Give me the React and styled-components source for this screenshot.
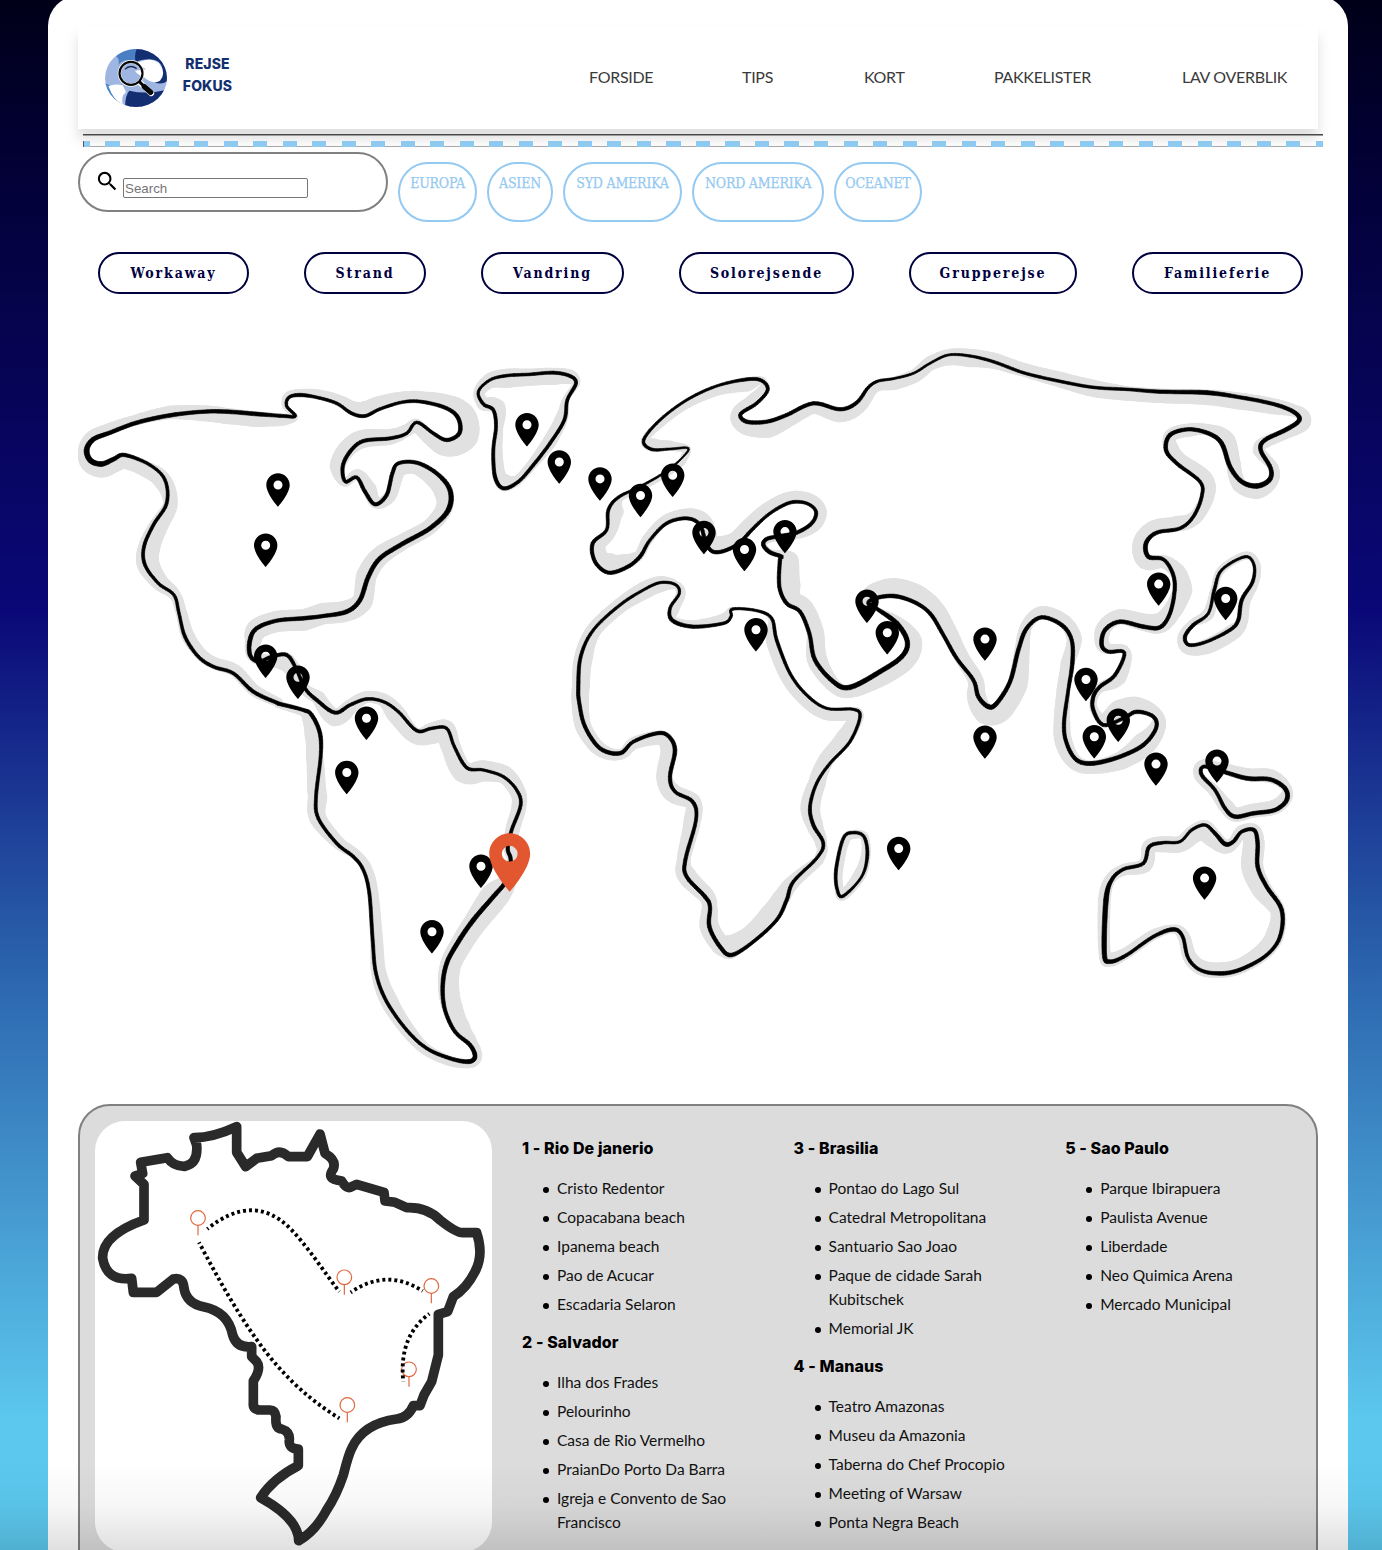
import React from "react";
import styled, { createGlobalStyle } from "styled-components";

const GlobalStyle = createGlobalStyle`
  * { box-sizing: border-box; }
  body { margin: 0; background: #5cc8ee; }
`;

const sans = `Lato, "Open Sans", "Liberation Sans", sans-serif`;
const heading = `Inter, Roboto, "Liberation Sans", sans-serif`;
const serif = `"DejaVu Serif Condensed", "DejaVu Serif", "Liberation Serif", serif`;

const Backdrop = styled.div`
  position: relative;
  height: 1550px;
  overflow: hidden;
  padding: 0 34px 0 48px;
  background: linear-gradient(#010018 0, #020030 130px, #0a0878 612px, #2a62ac 960px, #5cc8ee 1420px);
`;

const BottomShade = styled.div`
  position: absolute;
  inset: auto 0 0 0;
  height: 90px;
  background: linear-gradient(rgba(0, 0, 0, 0), rgba(0, 0, 0, 0.03) 50%, rgba(0, 0, 0, 0.12));
  pointer-events: none;
`;

const Page = styled.main`
  margin-top: -4px;
  min-height: 1700px;
  padding: 30px;
  border-radius: 30px;
  background: #fff;
`;

const Header = styled.header`
  display: flex;
  align-items: center;
  justify-content: space-between;
  height: 103px;
  padding: 0 30px 0 27px;
  background: #fff;
  box-shadow: 0 10px 12px rgba(0, 0, 0, 0.13);
`;

const Brand = styled.a`
  display: flex;
  align-items: center;
  gap: 15px;
`;

const BrandName = styled.span`
  width: 51px;
  margin-bottom: 6px;
  font: 800 14px/21.5px ${heading};
  letter-spacing: 0.1px;
  text-align: center;
  color: #14306f;
`;

const Nav = styled.nav`
  display: flex;
  gap: 90px;
  margin-bottom: 2px;
`;

const NavLink = styled.a`
  width: ${(p) => p.$w}px;
  font: 400 16px/24px ${sans};
  letter-spacing: -0.3px;
  white-space: nowrap;
  color: #3a3a3a;
`;

const Rule = styled.div`
  position: relative;
  width: 1240px;
  height: 2px;
  margin: 5px 0 0 5px;
  border-top: 1px solid #484848;
  border-bottom: 1px solid #9c9c9c;
`;

const DashRule = styled.div`
  position: relative;
  width: 1240px;
  height: 6px;
  margin: 5px 0 0 5px;
  border-left: 1px solid #555;
  background:
    repeating-linear-gradient(to right, #8ec9f0 0 7.1px, transparent 7.1px 22.5px, #8ec9f0 22.5px 29.52px) border-box,
    linear-gradient(#a8a8a8, #a8a8a8) bottom / 100% 1px no-repeat;
`;

const SearchRow = styled.section`
  display: flex;
  align-items: flex-start;
  gap: 10px;
  margin-top: 5px;
`;

const SearchBox = styled.label`
  display: flex;
  width: 310px;
  height: 60px;
  padding: 17px 17px 0;
  gap: 5px;
  border: 2px solid #808080;
  border-radius: 30px;
`;

const SearchInput = styled.input`
  width: 185px;
  height: 20px;
  margin: 7px 0 0;
  padding: 1px;
  border: 1px solid #767676;
  border-radius: 2px;
  background: #fff;
  font: 13.33px "Liberation Sans", Arial, sans-serif;
  &::placeholder { color: #757575; opacity: 1; }
`;

const RegionTag = styled.button`
  width: ${(p) => p.$w}px;
  height: 60px;
  margin-top: 10px;
  padding: 9px 0 0;
  display: flex;
  justify-content: center;
  align-items: flex-start;
  border: 2px solid #94c9f2;
  border-radius: 30px;
  background: none;
  font: 14px/20px ${serif};
  letter-spacing: -0.2px;
  white-space: nowrap;
  color: #94c9f2;
  -webkit-text-stroke: 0.25px #94c9f2;
`;

const TopicRow = styled.section`
  display: flex;
  gap: 55px;
  margin: 30px 0 0 20px;
`;

const Topic = styled.button`
  flex: none;
  width: ${(p) => p.$w}px;
  height: 42px;
  padding: 0;
  border: 2px solid #00003f;
  border-radius: 21px;
  background: none;
  font: bold 14px/20px ${serif};
  letter-spacing: 1.85px;
  white-space: nowrap;
  color: #00003f;
`;

const WorldMap = styled.svg`
  display: block;
  width: 1240px;
  height: 740px;
  margin-top: 46px;
`;

const CountryPanel = styled.section`
  display: flex;
  margin-top: 24px;
  min-height: 520px;
  padding: 15px;
  border: 2px solid #808080;
  border-radius: 32px;
  background: #dcdcdc;
`;

const RouteMap = styled.svg`
  display: block;
  flex: none;
  width: 397px;
  height: 431px;
  border-radius: 30px;
  background: #fff;
`;

const Columns = styled.div`
  display: grid;
  grid-template-columns: repeat(3, 241.6px);
  gap: 30px;
  align-items: start;
  padding: 15px 0 0 30px;
`;

const CityTitle = styled.h4`
  margin: 0 0 16px;
  font: 800 16px/24px ${heading};
  letter-spacing: 0.1px;
  color: #000;
`;

const SightList = styled.ul`
  margin: 0 0 13.5px;
  padding: 0 0 0 35px;
  list-style: none;
`;

const Sight = styled.li`
  position: relative;
  margin-bottom: 5px;
  font: 400 15.5px/24px ${sans};
  letter-spacing: 0;
  color: #111;
  &::before {
    content: "";
    position: absolute;
    left: -14px;
    top: 11px;
    width: 6px;
    height: 6px;
    border-radius: 50%;
    background: #000;
  }
`;

/*
 * Coastlines are digitised on sheets. Each sheet has its own origin, and its
 * points are in thirds of a pixel: x, y, shade to the left of the direction
 * of travel, shade to the right, and the ink width.
 */
const A = [70, 340], B = [470, 340], C = [880, 340], D = [240, 700], E = [560, 560], F = [960, 600];

const coasts = [
  [
    [A, `70,298,28,5,15 120,278,30,5,13 200,248,25,8,13 300,226,30,12,13 400,215,20,30,12 470,215,12,38,13 560,222,8,40,13 640,228,8,30,11 676,228,8,8,10 650,198,14,3,10 657,172,18,5,10 690,165,18,5,12 740,172,25,5,10 800,190,28,8,10 845,220,38,6,11 885,228,45,5,11 930,207,40,5,10 1000,186,32,5,10 1060,186,32,5,11 1130,205,42,5,12 1165,235,55,5,13 1168,280,60,5,13 1130,300,50,5,12 1090,280,40,5,11 1040,247,30,10,10 1010,280,10,28,10 960,295,20,28,11 880,303,22,35,12 840,335,15,40,12 818,380,8,40,12 826,425,5,15,11 860,412,26,8,11 885,455,38,8,12 915,493,20,12,12 950,465,8,30,12 967,400,5,35,12 985,370,5,40,11 1040,368,5,35,12 1100,400,5,45,13 1140,450,5,50,15 1135,510,12,40,16 1080,565,20,28,14 1000,610,20,30,14 930,655,25,35,14 895,710,25,38,14 870,780,40,22,14 830,815,30,35,14 760,828,25,40,12 700,835,38,28,13 620,842,35,30,12 560,865,35,30,13 540,900,35,15,14 540,945,28,12,13 565,965,30,8,11 605,950,5,35,11 650,945,8,50,12 678,985,15,35,11 705,1045,15,20,11 740,1080,30,12,12`],
    [D, `285,38,12,42,12 330,15,18,28,11 380,-3,25,12,10 430,5,25,15,10 475,35,20,40,10 530,92,8,40,11 575,85,18,48,10 620,85,25,40,10 643,140,20,40,10 680,203,15,50,11 730,210,30,35,9 790,230,35,20,10 830,270,25,25,10 842,315,18,28,11 815,390,25,20,11 803,445,25,12,12 812,480,25,12,12 800,540,30,15,13 760,590,45,42,14 700,660,45,26,15 655,725,45,22,15 620,790,45,20,14 608,860,50,15,13 615,930,55,8,12 645,995,50,5,12 690,1035,25,5,13 705,1070,22,5,14 685,1085,20,5,14 630,1075,24,8,12 560,1045,22,14,11 500,990,20,25,11 440,905,20,35,11 408,820,15,32,11 398,720,8,32,11 388,580,6,28,11 370,510,5,28,11 340,470,6,26,11 290,430,15,25,11 235,355,28,25,11 228,290,25,35,11 242,170,45,8,11 240,100,48,4,13 215,45,32,4,13 190,30,20,6,12 120,12,14,10,12`],
    [A, `620,1088,12,18,12 550,1055,14,24,12 490,1000,10,30,11 430,980,8,30,11 385,950,8,30,11 345,890,12,30,11 327,820,10,25,10 312,765,16,20,10 265,730,20,32,10 225,675,25,45,11 222,620,18,50,11 250,555,14,45,11 290,490,10,34,11 285,420,36,20,10 240,375,42,8,10 165,345,42,5,12 130,358,40,5,14 95,372,42,5,16 62,362,36,5,17 50,330,26,5,17`],
  ],
  [[B, `25,155,14,20,9 60,120,22,25,9 110,107,22,38,10 180,103,18,35,10 250,98,15,38,11 300,108,20,25,11 318,130,12,10,11 292,180,5,15,11 283,240,10,30,11 240,310,18,26,11 190,375,12,20,11 145,425,10,20,11 100,445,8,45,12 75,410,8,34,12 70,330,6,28,11 78,260,6,22,11 70,210,6,40,11 40,192,20,20,11`]],
  [
    [B, `521,300,8,14,10 570,240,6,22,9 650,180,5,25,9 740,138,5,30,9 830,118,5,38,11 875,122,12,8,11 893,150,5,28,11 860,190,5,35,11 812,222,5,28,12 830,245,5,40,13 890,245,5,50,12 950,225,5,38,12 1030,190,5,32,12 1110,208,5,40,12 1160,188,5,35,12 1195,142,5,30,10`],
    [C, `-5,123,5,30,9 40,116,6,35,8 100,100,12,30,8 150,70,22,22,8 205,45,18,32,8 270,48,22,35,9 340,65,28,22,10 430,98,30,12,10 530,122,30,18,10 640,142,24,30,10 740,148,10,35,10 840,155,10,35,12 980,158,10,38,14 1080,172,15,38,12 1180,192,18,32,12 1240,215,22,15,13 1258,240,38,5,14 1220,268,28,5,14 1155,300,25,12,13 1142,330,12,25,13 1172,385,25,6,13 1168,420,28,5,15 1130,438,40,5,16 1085,425,35,10,14 1050,380,10,35,14 1025,310,5,45,14 985,280,5,28,13 925,268,24,18,12 870,285,22,18,13 858,330,40,5,13 890,370,36,5,12 960,425,42,5,11 965,470,38,5,11 940,530,28,15,11 900,565,8,40,11 830,578,5,40,12 798,610,5,40,14 805,650,5,42,14 850,658,12,28,11 878,700,40,8,12 884,750,54,5,12 870,820,30,28,12 840,862,18,45,13 790,860,14,40,13 720,845,8,38,13 675,870,18,30,13 665,915,25,18,13 685,935,25,6,12 733,938,20,5,11 705,1005,38,6,12`],
    [F, `420,260,18,12,12 400,290,15,8,12 400,330,15,10,12 430,375,30,6,12 490,355,60,8,11 530,335,45,10,12 580,350,30,5,12 588,385,28,22,12 550,435,35,38,13 480,470,40,16,13 400,490,32,8,14 350,480,32,15,13 320,430,35,20,12 312,370,32,20,12 325,270,36,5,11 337,190,36,6,13 335,120,15,32,12 305,75,8,35,13 245,52,5,35,12 200,85,15,22,13 175,150,35,12,13 150,245,55,6,13 110,310,58,8,14 85,320,55,8,15 55,290,35,24,13 40,240,18,30,12`],
    [C, `230,955,8,38,12 190,885,6,45,12 150,820,8,48,12 100,785,5,55,12 40,768,5,55,13`],
    [E, `945,115,5,45,12 925,130,4,20,12 950,146,5,5,12 1010,190,22,5,16 1042,245,45,5,15 1025,290,46,5,15 960,335,45,5,15 870,382,32,6,16 820,365,30,15,14 765,300,25,38,13 748,220,8,45,12 720,155,6,45,12 680,130,8,45,12 658,80,5,65,12 660,0,5,58,12`],
    [B, `935,650,5,20,12 900,637,8,10,13 880,615,5,10,13 890,597,5,15,12 930,588,3,14,12 980,578,5,20,12 1025,550,5,30,12 1038,515,5,33,11 1010,490,5,33,10 960,488,5,34,11 900,520,5,36,10 850,565,5,38,11 800,615,5,40,12 740,637,5,50,12 710,615,5,40,12 690,555,5,40,12 650,535,5,30,11 590,550,6,26,11 540,600,10,24,10 510,650,10,20,12 470,682,5,42,12 415,698,5,60,12 375,665,6,45,12 368,610,5,40,12 410,570,8,30,10 415,510,5,48,11 445,472,5,16,10 510,440,5,14,8 580,400,6,16,7 630,360,5,20,6 655,325,20,5,7 600,327,5,26,8 545,328,8,35,10`],
  ],
  [[E, `55,380,20,35,12 62,290,20,38,11 100,210,22,25,10 180,135,22,25,10 250,90,25,30,9 300,68,20,30,9 345,73,12,14,9 358,100,20,10,9 330,145,30,5,10 338,182,14,5,13 400,200,20,5,12 490,190,30,5,10 513,170,26,4,9 518,147,5,4,9 590,152,5,5,9 635,175,5,10,10 650,240,5,34,11 690,340,5,34,10 740,405,5,34,10 800,445,5,36,9 880,448,5,36,9 900,470,12,30,10 870,545,5,48,10 810,610,8,40,10 770,670,28,26,10 750,740,32,30,11 760,795,30,22,12 790,850,10,25,11 770,895,24,8,10 700,965,22,22,11 680,1020,8,45,12 650,1080,5,58,11 580,1145,5,50,11 515,1185,6,62,13 480,1160,25,35,13 448,1100,30,30,13 450,1040,25,22,12 435,1010,20,30,13 380,950,28,32,12 376,900,26,16,12 408,780,38,16,11 398,725,25,25,12 345,695,36,22,11 330,650,42,6,12 345,570,44,8,13 325,528,40,8,12 290,520,36,8,12 220,545,24,15,11 180,580,20,12,13 120,565,25,20,13 75,500,30,20,12 58,430,24,30,12`]],
  [[E, `850,835,8,22,10 880,818,8,20,10 912,830,14,12,10 922,885,10,20,11 905,950,12,28,8 850,1008,14,18,10 832,990,8,20,10 828,930,6,22,11`]],
  [[C, `1095,650,16,10,9 1122,675,20,5,9 1118,725,20,5,11 1085,780,28,5,12 1075,840,30,5,12 1050,870,35,15,11 980,905,38,10,10 928,915,30,4,11 915,890,22,4,12 940,855,18,6,12 985,820,18,20,9 1003,750,12,10,11 1025,690,14,12,9`]],
  [[F, `730,500,22,5,11 775,510,25,10,12 860,535,32,8,14 930,538,32,12,13 975,565,20,10,14 980,600,14,28,14 945,630,14,32,13 880,640,14,30,13 825,650,16,28,13 795,625,16,30,12 765,570,22,14,11 725,525,24,6,12`]],
  [[F, `735,675,16,45,10 765,700,14,45,12 795,732,14,30,14 820,725,16,20,12 845,695,20,20,11 882,690,18,35,12 893,730,22,45,13 893,800,18,50,13 920,860,14,48,13 965,930,10,34,13 960,1010,12,45,12 920,1065,12,42,11 850,1105,14,34,12 790,1120,14,34,13 725,1112,16,32,11 685,1075,16,28,11 668,1010,16,22,11 640,988,12,14,13 580,1010,12,22,11 500,1065,12,24,11 450,1085,16,28,13 433,1060,18,20,15 438,900,25,15,16 455,840,22,12,12 490,808,16,20,11 550,790,14,30,11 568,740,22,22,12 610,728,20,30,10 660,725,18,32,9 695,690,14,42,10`]],
];

const parse = (sheets) =>
  sheets.flatMap(([[ox, oy], pts]) =>
    pts.split(" ").map((s) => {
      const [x, y, l, r, w] = s.split(",").map(Number);
      return [ox + x / 3, oy + y / 3, l / 3, r / 3, w / 3];
    })
  );

const smooth = (pts) => {
  const n = pts.length;
  const out = [];
  for (let i = 0; i < n; i++) {
    const [p0, p1, p2, p3] = [-1, 0, 1, 2].map((k) => pts[(i + k + n) % n]);
    for (let s = 0; s < 6; s++) {
      const t = s / 6;
      out.push(
        p1.map((_, k) =>
          k > 1
            ? p1[k] + (p2[k] - p1[k]) * t
            : 0.5 *
              (2 * p1[k] +
                (p2[k] - p0[k]) * t +
                (2 * p0[k] - 5 * p1[k] + 4 * p2[k] - p3[k]) * t * t +
                (3 * p1[k] - p0[k] - 3 * p2[k] + p3[k]) * t * t * t)
        )
      );
    }
  }
  return out;
};

/* Unit normal that points to the left of the direction of travel. */
const normals = (pts) => {
  const n = pts.length;
  return pts.map((_, i) => {
    const a = pts[(i + n - 2) % n];
    const b = pts[(i + 2) % n];
    const len = Math.hypot(b[0] - a[0], b[1] - a[1]) || 1;
    return [(b[1] - a[1]) / len, -(b[0] - a[0]) / len];
  });
};

/* The shade is a brush stroke: short round-capped steps of varying width. */
const brush = (pts) => {
  const ns = normals(pts);
  const mids = pts.map((p, i) => {
    const shift = (p[2] - p[3]) / 2;
    return [p[0] + ns[i][0] * shift, p[1] + ns[i][1] * shift, p[2] + p[3] - 0.6];
  });
  return mids.map((m, i) => {
    const f = mids[(i + 1) % mids.length];
    return [`M${m[0].toFixed(1)} ${m[1].toFixed(1)}L${f[0].toFixed(1)} ${f[1].toFixed(1)}`, ((m[2] + f[2]) / 2).toFixed(1)];
  });
};

const ink = (pts) => {
  const ns = normals(pts);
  const edges = pts.map((p, i) => {
    const h = p[4] / 2 - 0.3;
    const [nx, ny] = ns[i];
    return [p[0] + nx * h, p[1] + ny * h, p[0] - nx * h, p[1] - ny * h].map((v) => v.toFixed(1));
  });
  return edges
    .map((e, i) => {
      const f = edges[(i + 1) % edges.length];
      return `M${e[0]} ${e[1]}L${f[0]} ${f[1]}L${f[2]} ${f[3]}L${e[2]} ${e[3]}Z`;
    })
    .join("");
};

const curves = coasts.map((c) => smooth(parse(c)));
const shades = curves.flatMap(brush);
const inks = curves.map(ink);

const pins = [
  [278, 506.7], [265.7, 567], [265.7, 678], [298, 699], [366.5, 740], [346.8, 794.2], [481, 888], [432, 953.5],
  [527, 446.5], [559.3, 483.7], [600, 500.6], [640.5, 517.2], [672.7, 497], [704, 554.2], [744.5, 571.2],
  [785, 553.3], [756, 651.5], [867, 623], [887.3, 654.5], [898.7, 870.2], [985, 660.8], [1158.7, 605.8],
  [1225.7, 620.2], [1086, 701.2], [1118.3, 742], [1094.3, 758.5], [1156, 785.8], [985, 758.8], [1217, 782.8],
  [1204.6, 899.8],
];

const pinShape =
  "M0-20C-3.87-20-7-16.87-7-13c0 5.25 7 13 7 13s7-7.75 7-13c0-3.87-3.13-7-7-7zm0 9.7a2.7 2.7 0 1 1 0-5.4 2.7 2.7 0 0 1 0 5.4z";

const brazil =
  "M500 95L500 172L527 215L560 190L605 182Q630 160 655 185L712 185L750 117L765 175Q800 195 790 222Q770 250 800 255L815 258Q830 285 845 275L860 268L942 292L945 318L975 322L1010 338Q1070 335 1110 375Q1160 415 1180 413L1220 413Q1242 480 1215 530Q1190 580 1150 605L1133 650L1105 658L1105 780L1085 860L1062 900L1050 932L1030 932Q1015 968 980 972Q880 985 845 1060Q835 1080 820 1140Q800 1200 770 1245Q735 1310 686 1337Q685 1270 572 1208Q610 1150 685 1112L685 1062Q655 1062 658 1035Q660 1010 635 1002Q615 1000 618 965Q615 945 600 945L565 945Q548 940 550 925L550 858Q575 820 560 800L545 785L545 755Q500 760 488 720Q475 650 400 635Q350 625 342 580Q340 545 310 552L260 592L190 592L185 550Q110 560 98 490Q95 420 222 375L222 268L195 243L218 235L212 202L292 188Q310 215 345 214Q385 205 380 150L372 128Q430 128 500 95Z";

const stops = [[384, 369], [823, 547], [1084, 573], [1017, 823], [832, 930]];

const routes = [
  "M412 402C500 330 585 325 660 400C718 460 765 535 808 590",
  "M842 592Q950 518 1058 588",
  "M1078 656Q985 725 1000 860",
  "M387 442C470 600 545 725 620 810C685 885 745 930 808 970",
];

const nav = [["FORSIDE", 63], ["TIPS", 32], ["KORT", 40], ["PAKKELISTER", 98], ["LAV OVERBLIK", 106]];
const regions = [["EUROPA", 79], ["ASIEN", 66], ["SYD AMERIKA", 119], ["NORD AMERIKA", 132], ["OCEANET", 88]];
const topics = [
  ["Workaway", 151], ["Strand", 122], ["Vandring", 143], ["Solorejsende", 175], ["Grupperejse", 168], ["Familieferie", 171],
];
const columns = [
  [
    ["1 - Rio De janerio", ["Cristo Redentor", "Copacabana beach", "Ipanema beach", "Pao de Acucar", "Escadaria Selaron"]],
    ["2 - Salvador", ["Ilha dos Frades", "Pelourinho", "Casa de Rio Vermelho", "PraianDo Porto Da Barra", "Igreja e Convento de Sao Francisco"]],
  ],
  [
    ["3 - Brasilia", ["Pontao do Lago Sul", "Catedral Metropolitana", "Santuario Sao Joao", "Paque de cidade Sarah Kubitschek", "Memorial JK"]],
    ["4 - Manaus", ["Teatro Amazonas", "Museu da Amazonia", "Taberna do Chef Procopio", "Meeting of Warsaw", "Ponta Negra Beach"]],
  ],
  [["5 - Sao Paulo", ["Parque Ibirapuera", "Paulista Avenue", "Liberdade", "Neo Quimica Arena", "Mercado Municipal"]]],
];

const Logo = () => (
  <svg width="62" height="58" viewBox="195 147 186 174">
    <defs>
      <clipPath id="globe"><ellipse cx="288" cy="234" rx="93" ry="87" /></clipPath>
    </defs>
    <g clipPath="url(#globe)">
      <rect x="195" y="147" width="186" height="174" fill="#9fb6e2" />
      <path d="M228 168Q255 145 292 147L285 190Q255 170 235 195Q240 178 228 168Z" fill="#4a7fc4" />
      <path d="M195 250Q205 300 250 325L215 258Z" fill="#4a86cc" />
      <path d="M290 147L385 147L385 240Q370 255 345 248Q372 235 368 208Q362 178 330 178Q300 178 287 188Q282 165 290 147Z" fill="#142e72" />
      <path d="M290 190Q330 168 357 190Q380 220 360 242Q338 255 312 232Q290 222 285 212L318 208Z" fill="#fff" />
      <path d="M255 325Q255 285 268 272Q320 285 385 268L385 325Z" fill="#142e72" />
      <path d="M205 258Q225 250 248 256L258 276Q240 290 250 318Q220 300 205 258Z" fill="#fff" />
    </g>
    <path d="M300 248L334 280" stroke="#fff" strokeWidth="17" strokeLinecap="round" />
    <circle cx="273" cy="220" r="35" fill="none" stroke="#fff" strokeWidth="10" />
    <circle cx="273" cy="220" r="34.5" fill="none" stroke="#080808" strokeWidth="6.5" />
    <path d="M298 245L315 262" stroke="#080808" strokeWidth="9" />
    <path d="M313 260L332 277" stroke="#080808" strokeWidth="16" strokeLinecap="round" />
    <path d="M255 208Q270 192 290 206" fill="none" stroke="#1b2c50" strokeWidth="4" />
  </svg>
);

export default function App() {
  return (
    <Backdrop>
      <GlobalStyle />
      <Page>
        <Header>
          <Brand>
            <Logo />
            <BrandName>REJSE FOKUS</BrandName>
          </Brand>
          <Nav>
            {nav.map(([t, w]) => <NavLink key={t} $w={w}>{t}</NavLink>)}
          </Nav>
        </Header>
        <Rule />
        <DashRule />
        <SearchRow>
          <SearchBox>
            <svg width="21" height="21" viewBox="2.2 2.2 20 20">
              <path d="M15.5 14h-.79l-.28-.27A6.47 6.47 0 0 0 16 9.5 6.5 6.5 0 1 0 9.5 16c1.61 0 3.09-.59 4.23-1.57l.27.28v.79l5 4.99L20.49 19l-4.99-5zm-6 0C7.01 14 5 11.99 5 9.5S7.01 5 9.5 5 14 7.01 14 9.5 11.99 14 9.5 14z" />
            </svg>
            <SearchInput placeholder="Search" />
          </SearchBox>
          {regions.map(([t, w]) => <RegionTag key={t} $w={w}>{t}</RegionTag>)}
        </SearchRow>
        <TopicRow>
          {topics.map(([t, w]) => <Topic key={t} $w={w}>{t}</Topic>)}
        </TopicRow>
        <WorldMap viewBox="78 340 1240 740">
          <g fill="none" stroke="#e1e1e1" strokeLinecap="round">
            {shades.map(([d, w], i) => <path key={i} d={d} strokeWidth={w} />)}
          </g>
          {inks.map((d, i) => (
            <path key={i} d={d} fill="#000" stroke="#000" strokeWidth="0.6" strokeLinejoin="round" />
          ))}
          {pins.map(([x, y]) => (
            <path key={`${x}-${y}`} d={pinShape} transform={`translate(${x} ${y}) scale(1.67)`} />
          ))}
          <path d={pinShape} fill="#e2572f" transform="translate(509.7 891.7) scale(2.92)" />
        </WorldMap>
        <CountryPanel>
          <RouteMap viewBox="75 78 1191 1293">
            <path d={brazil} fill="none" stroke="#2a2a2a" strokeWidth="29" strokeLinejoin="round" />
            {stops.map(([x, y]) => (
              <g key={x} fill="none" stroke="#e0683f" strokeWidth="3.6">
                <circle cx={x} cy={y} r="22" />
                <path d={`M${x} ${y + 22}v30`} />
              </g>
            ))}
            {routes.map((d) => (
              <path key={d} d={d} fill="none" stroke="#000" strokeWidth="11.5" strokeDasharray="9 9" strokeDashoffset="5" />
            ))}
          </RouteMap>
          <Columns>
            {columns.map((cities, i) => (
              <div key={i}>
                {cities.map(([city, sights]) => (
                  <React.Fragment key={city}>
                    <CityTitle>{city}</CityTitle>
                    <SightList>
                      {sights.map((s) => <Sight key={s}>{s}</Sight>)}
                    </SightList>
                  </React.Fragment>
                ))}
              </div>
            ))}
          </Columns>
        </CountryPanel>
      </Page>
      <BottomShade />
    </Backdrop>
  );
}
